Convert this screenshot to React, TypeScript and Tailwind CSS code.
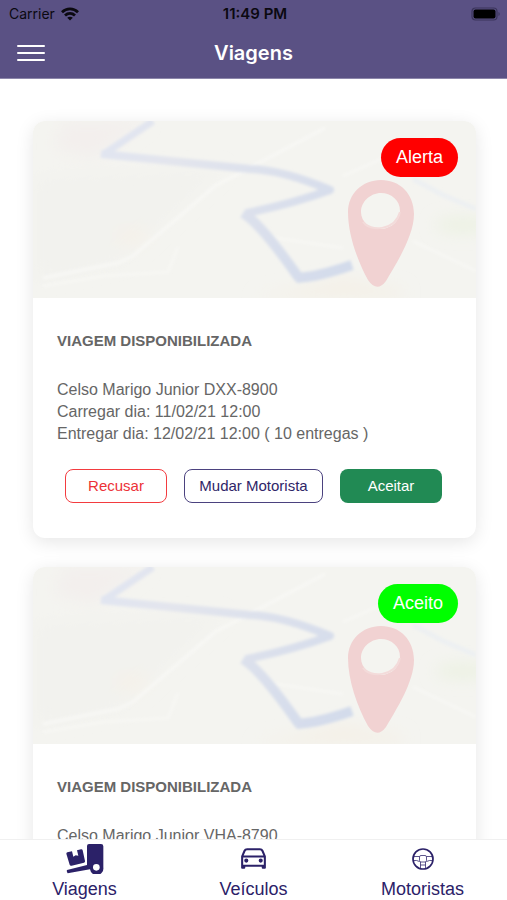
import { IoCarOutline } from "react-icons/io5";

const trips = [
  {
    id: 1,
    status: "Alerta",
    badge: "bg-[#ff0000]",
    driver: "Celso Marigo Junior DXX-8900",
    load: "Carregar dia: 11/02/21 12:00",
    delivery: "Entregar dia: 12/02/21 12:00 ( 10 entregas )",
  },
  {
    id: 2,
    status: "Aceito",
    badge: "bg-[#00ff00]",
    driver: "Celso Marigo Junior VHA-8790",
    load: "Carregar dia: 11/02/21 12:00",
    delivery: "Entregar dia: 12/02/21 12:00 ( 10 entregas )",
  },
];

function WifiIcon() {
  return (
    <svg width="18" height="14" viewBox="0 0 18 14" fill="none" stroke="#0b0910" strokeWidth="2.8" aria-hidden="true">
      <path d="M1 5.2C5.6.8 12.4.8 17 5.2" />
      <path d="M4 8.5c2.9-2.7 7.1-2.7 10 0" />
      <path d="M9 13.6 6.2 10.8c1.6-1.4 4-1.4 5.6 0z" fill="#0b0910" stroke="none" />
    </svg>
  );
}

function BatteryIcon() {
  return (
    <svg width="30" height="14" viewBox="0 0 30 14" aria-hidden="true">
      <rect x="1" y="1" width="25" height="12" rx="3.5" fill="none" stroke="#3b355b" strokeWidth="1.2" />
      <rect x="2.5" y="2.5" width="22" height="9" rx="2" fill="#000" />
      <path d="M27.5 5v4c1.6-.6 1.6-3.4 0-4z" fill="#3b355b" />
    </svg>
  );
}

function TruckIcon() {
  return (
    <svg width="38" height="30" viewBox="0 0 114 90" fill="#2b2168" aria-hidden="true">
      <path d="M63 6q0-6 6-6h36q7 0 7 7v63a20 20 0 0 1-40 6L5 88q-4-6-2-10l60-15z" />
      <path d="M1 29q0-3 3-4l14-3 4 16 7-4 8 1-4-16 12-3q4-1 5 3l7 32q1 4-3 5l-37 9q-5 1-6-3z" />
      <circle cx="91" cy="70" r="10" fill="#fff" />
    </svg>
  );
}

function WheelIcon() {
  return (
    <svg width="24" height="24" viewBox="0 0 24 24" fill="none" stroke="#2b2168" aria-hidden="true">
      <circle cx="12" cy="12" r="10" strokeWidth="1.7" />
      <g strokeWidth="0.9" strokeOpacity="0.85">
        <rect x="8.5" y="8.5" width="7" height="6.5" rx="1.5" />
        <path d="M2.5 9.5h6M15.5 9.5h6M2.5 13.5h3l3 1M21.5 13.5h-3l-3 1M9.5 15v6.5M14.5 15v6.5M9.5 18h5" />
      </g>
    </svg>
  );
}

function RouteMap() {
  return (
    <svg
      viewBox="0 0 443 177"
      preserveAspectRatio="xMidYMid slice"
      className="block h-[177px] w-full"
      role="img"
      aria-label="Mapa da rota"
    >
      <defs>
        <filter id="soft" x="-20%" y="-20%" width="140%" height="140%">
          <feGaussianBlur stdDeviation="1.4" />
        </filter>
        <filter id="haze" x="-50%" y="-50%" width="200%" height="200%">
          <feGaussianBlur stdDeviation="8" />
        </filter>
        <linearGradient id="route" x1="60" y1="0" x2="310" y2="150" gradientUnits="userSpaceOnUse">
          <stop offset="0" stopColor="#e0e5f2" />
          <stop offset="0.3" stopColor="#e3e5ed" />
          <stop offset="1" stopColor="#d3dbeb" />
        </linearGradient>
      </defs>
      <rect width="443" height="177" fill="#f4f4f0" />
      <g filter="url(#haze)">
        <path d="M30 0h85L60 38 20 28z" fill="#f3efed" />
        <path d="M0 55l190-8L90 140 0 160z" fill="#f2f2ee" />
        <ellipse cx="98" cy="115" rx="18" ry="8" fill="#f5f1e9" />
        <ellipse cx="430" cy="104" rx="28" ry="7" fill="#ebf1e1" />
        <path d="M220 177l90-20 60 12v8z" fill="#f4f0e7" />
      </g>
      <g filter="url(#soft)" fill="none" stroke="#f8f8f5">
        <path d="M10 157l75-15 15-7 82-70 110-58" strokeWidth="3" />
        <path d="M10 165l60-10 65-4 10-25" strokeWidth="2" />
        <path d="M230 115l80 12M380 120l63 30M310 55l90-40" strokeWidth="2" />
        <path d="M380 58l30 16 33 14" stroke="#edf0f2" strokeWidth="5" />
      </g>
      <g filter="url(#soft)" fill="none" stroke="url(#route)" strokeLinejoin="round">
        <path d="M120 0L71 33" strokeWidth="7" />
        <path d="M68 33L217 48Q250 49 297 69Q262 82 214 92" strokeWidth="8" />
        <path d="M210 92Q228 103 266 157" strokeWidth="10" />
        <path d="M263 157Q285 156 319 144" strokeWidth="10" />
      </g>
      <path
        fillRule="evenodd"
        fill="#f1d2d2"
        d="M348 59C367 59 381 73 381 93C381 115 363 143 353 160Q344 172 335 159C324 139 315 113 315 91C315 73 329 59 348 59zM348 72C337 72 328 81 328 91C328 101 337 108 347 108C358 108 367 100 367 90C367 79 358 72 348 72z"
      />
      <path d="M330 101c7 10 32 9 37-10" fill="none" stroke="#f3dbda" strokeWidth="2" />
    </svg>
  );
}

type Trip = (typeof trips)[number];

function TripCard({ trip }: { trip: Trip }) {
  return (
    <article className="rounded-xl bg-white shadow-[0_4px_18px_rgba(0,0,0,0.1)]">
      <div className="relative overflow-hidden rounded-t-xl">
        <RouteMap />
        <span
          className={`absolute right-[18px] top-[17px] rounded-full px-[15px] text-lg leading-[39px] text-white ${trip.badge}`}
        >
          {trip.status}
        </span>
      </div>
      <div className="px-6 pb-[35px] pt-8 text-[#666]">
        <h2 className="text-[15px] font-bold leading-[22px]">VIAGEM DISPONIBILIZADA</h2>
        <div className="mt-[27px] text-base leading-[22px]">
          <p>{trip.driver}</p>
          <p>{trip.load}</p>
          <p>{trip.delivery}</p>
        </div>
        <div className="mt-6 flex gap-[17px] px-2 text-[15px]">
          <button type="button" className="h-[34px] w-[102px] rounded-lg border border-[#f33b3f] text-[#ec3237]">
            Recusar
          </button>
          <button type="button" className="h-[34px] w-[139px] rounded-lg border border-[#4b427f] text-[#2f2668]">
            Mudar Motorista
          </button>
          <button type="button" className="h-[34px] w-[102px] rounded-lg bg-[#218a54] text-white">
            Aceitar
          </button>
        </div>
      </div>
    </article>
  );
}

export default function App() {
  return (
    <div className="flex h-screen flex-col bg-white font-['Liberation_Sans',Arial,sans-serif]">
      <header className="shrink-0 border-b border-[#8c86aa] bg-[#5a5184] font-[Inter,sans-serif]">
        <div className="grid h-7 grid-cols-3 items-center pl-[9px] pr-[6px] text-sm text-[#0b0910]">
          <div className="flex items-center gap-[6px]">
            <span>Carrier</span>
            <WifiIcon />
          </div>
          <span className="text-center text-[15px] font-semibold">11:49 PM</span>
          <div className="flex justify-end">
            <BatteryIcon />
          </div>
        </div>
        <div className="grid h-[50px] grid-cols-3 items-center px-[17px]">
          <button type="button" aria-label="Abrir menu" className="flex w-7 flex-col gap-[5px]">
            <span className="h-[2px] rounded bg-white" />
            <span className="h-[2px] rounded bg-white" />
            <span className="h-[2px] rounded bg-white" />
          </button>
          <h1 className="text-center text-xl font-semibold text-white">Viagens</h1>
        </div>
      </header>

      <main className="flex min-h-0 flex-1 flex-col gap-[29px] overflow-y-auto pl-[33px] pr-[31px] pt-[42px] [scrollbar-width:none]">
        {trips.map((trip) => (
          <TripCard key={trip.id} trip={trip} />
        ))}
      </main>

      <nav className="grid h-[61px] shrink-0 grid-cols-3 border-t border-[#f0f0f0] bg-white text-lg leading-6 text-[#2b2168]">
        <a href="#viagens" className="flex flex-col items-center">
          <span className="flex h-[37px] items-center">
            <TruckIcon />
          </span>
          Viagens
        </a>
        <a href="#veiculos" className="flex flex-col items-center">
          <span className="flex h-[37px] items-center">
            <IoCarOutline size={33} />
          </span>
          Veículos
        </a>
        <a href="#motoristas" className="flex flex-col items-center">
          <span className="flex h-[37px] items-center">
            <WheelIcon />
          </span>
          Motoristas
        </a>
      </nav>
    </div>
  );
}
